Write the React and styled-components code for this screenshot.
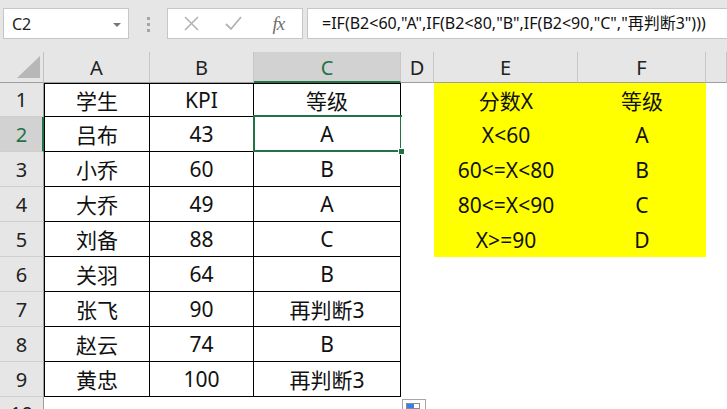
import React from 'react';
import styled, {createGlobalStyle} from 'styled-components';

const GREEN = '#217346';
const FONT = `"Noto Sans", "Noto Sans CJK SC", sans-serif`;

const columns = ['A', 'B', 'C', 'D', 'E', 'F', ''];

const rows = [
    ['学生', 'KPI', '等级', '', '分数X', '等级'],
    ['吕布', '43', 'A', '', 'X<60', 'A'],
    ['小乔', '60', 'B', '', '60<=X<80', 'B'],
    ['大乔', '49', 'A', '', '80<=X<90', 'C'],
    ['刘备', '88', 'C', '', 'X>=90', 'D'],
    ['关羽', '64', 'B'],
    ['张飞', '90', '再判断3'],
    ['赵云', '74', 'B'],
    ['黄忠', '100', '再判断3'],
];

const formula = '=IF(B2<60,"A",IF(B2<80,"B",IF(B2<90,"C","再判断3")))';

const App = () => {
    return (
        <Page>
            <GlobalStyle />
            <Toolbar>
                <NameBox>
                    <span>C2</span>
                    <Arrow />
                </NameBox>
                <Grip>
                    <i /><i /><i />
                </Grip>
                <FormulaButtons>
                    <Slot $w={43}>
                        <svg width="15" height="15" viewBox="0 0 15 15">
                            <path d="M1 1 L14 14 M14 1 L1 14" stroke="#b3b3b3" strokeWidth="1.6" fill="none" />
                        </svg>
                    </Slot>
                    <Slot $w={43}>
                        <svg width="17" height="15" viewBox="0 0 17 15">
                            <path d="M1 8 L6 13 L16 1" stroke="#b3b3b3" strokeWidth="1.8" fill="none" />
                        </svg>
                    </Slot>
                    <Slot $w={48}>
                        <Fx>fx</Fx>
                    </Slot>
                </FormulaButtons>
                <FormulaInput>{formula}</FormulaInput>
            </Toolbar>

            <Sheet>
                <Corner />
                {columns.map((c, i) => (
                    <ColHead key={i} $active={c === 'C'}>{c}</ColHead>
                ))}

                {rows.map((row, r) => (
                    <React.Fragment key={r}>
                        <RowHead $active={r === 1}>{r + 1}</RowHead>
                        {[0, 1, 2, 3, 4, 5, 6].map(c => (
                            <Cell
                                key={c}
                                $table={c < 3}
                                $left={c === 0}
                                $top={r === 0 && c < 3}
                                $fill={r < 5 && (c === 4 || c === 5)}
                                $selected={r === 1 && c === 2}
                            >
                                {row[c] || ''}
                                {r === 1 && c === 2 && <Handle />}
                            </Cell>
                        ))}
                    </React.Fragment>
                ))}

                <RowHead $last>10</RowHead>
                <BlankRow />

                <AutoFill>
                    <AutoFillBar />
                </AutoFill>
            </Sheet>
        </Page>
    );
};

const GlobalStyle = createGlobalStyle`
    html, body {
        margin : 0;
        padding : 0;
        background : #fff;
        overflow : hidden;
    }
    body {
        font-family : ${FONT};
    }
`;

const Page = styled.div`
    width : 727px;
    height : 409px;
    overflow : hidden;
    background : #fff;
`;

const Toolbar = styled.div`
    display : flex;
    align-items : flex-start;
    height : 52px;
    box-sizing : border-box;
    padding : 8px 0 0 3px;
    background : #e6e6e6;
`;

const NameBox = styled.div`
    display : flex;
    align-items : center;
    justify-content : space-between;
    width : 126px;
    height : 31px;
    box-sizing : border-box;
    padding : 0 7px 0 8px;
    background : #fff;
    border : 1px solid #c6c6c6;
    font-size : 16px;
    color : #222;
`;

const Arrow = styled.div`
    width : 0;
    height : 0;
    border-left : 4px solid transparent;
    border-right : 4px solid transparent;
    border-top : 4px solid #777;
    margin-top : 2px;
`;

const Grip = styled.div`
    display : flex;
    flex-direction : column;
    align-items : center;
    gap : 3px;
    width : 38px;
    padding-top : 9px;

    i {
        display : block;
        width : 3px;
        height : 3px;
        background : #a6a6a6;
    }
`;

const FormulaButtons = styled.div`
    display : flex;
    align-items : center;
    width : 136px;
    height : 31px;
    box-sizing : border-box;
    padding-left : 2px;
    background : #fff;
    border : 1px solid #c6c6c6;
`;

const Slot = styled.div`
    display : flex;
    align-items : center;
    justify-content : center;
    width : ${p => p.$w}px;
    height : 100%;
`;

const Fx = styled.span`
    font-family : "Liberation Serif", serif;
    font-style : italic;
    font-size : 19px;
    color : #707070;
    letter-spacing : -1px;
`;

const FormulaInput = styled.div`
    flex : 1;
    height : 31px;
    box-sizing : border-box;
    margin-left : 4px;
    margin-right : -1px;
    padding-left : 14px;
    background : #fff;
    border : 1px solid #c6c6c6;
    font-size : 16px;
    line-height : 29px;
    color : #111;
    white-space : nowrap;
`;

const Sheet = styled.div`
    position : relative;
    display : grid;
    grid-template-columns : 44px 106px 104px 147px 33px 144px 128px 1fr;
    grid-template-rows : 31px 34px repeat(8, 35px) 35px;
    font-size : 21px;
    color : #111;
`;

const Corner = styled.div`
    position : relative;
    background : #e6e6e6;
    border-right : 1px solid #c2c2c2;
    border-bottom : 1px solid #9e9e9e;
    box-sizing : border-box;

    &::after {
        content : '';
        position : absolute;
        right : 3px;
        bottom : 4px;
        border-left : 23px solid transparent;
        border-bottom : 22px solid #b7b7b7;
    }
`;

const ColHead = styled.div`
    display : flex;
    align-items : center;
    justify-content : center;
    box-sizing : border-box;
    background : ${p => p.$active ? '#d2d2d2' : '#e6e6e6'};
    color : ${p => p.$active ? GREEN : '#222'};
    border-right : 1px solid #c6c6c6;
    border-bottom : ${p => p.$active ? `2px solid ${GREEN}` : '1px solid #9e9e9e'};
    font-size : 20px;
    padding-top : ${p => p.$active ? '1px' : '0'};
`;

const RowHead = styled.div`
    display : flex;
    align-items : ${p => p.$last ? 'flex-start' : 'center'};
    justify-content : center;
    box-sizing : border-box;
    background : ${p => p.$active ? '#d2d2d2' : '#e6e6e6'};
    color : ${p => p.$active ? GREEN : '#222'};
    border-right : ${p => p.$active ? `2px solid ${GREEN}` : '1px solid #9e9e9e'};
    border-bottom : 1px solid #cfcfcf;
    font-size : 20px;
    padding-top : ${p => p.$last ? '3px' : '0'};
    padding-left : ${p => p.$active ? '1px' : '0'};
`;

const Cell = styled.div`
    position : relative;
    display : flex;
    align-items : center;
    justify-content : center;
    box-sizing : border-box;
    white-space : nowrap;
    background : ${p => p.$fill ? '#ffff00' : '#fff'};
    border-right : ${p => p.$table ? '1px solid #000' : 'none'};
    border-bottom : ${p => p.$table ? '1px solid #000' : 'none'};
    border-left : ${p => p.$left ? '1px solid #000' : 'none'};
    border-top : ${p => p.$top ? '1px solid #000' : 'none'};

    &::after {
        content : '';
        display : ${p => p.$selected ? 'block' : 'none'};
        position : absolute;
        left : -1px;
        top : -2px;
        right : -2px;
        bottom : -1px;
        border : 2px solid ${GREEN};
        pointer-events : none;
    }
`;

const Handle = styled.div`
    position : absolute;
    right : -5px;
    bottom : -4px;
    width : 5px;
    height : 5px;
    background : ${GREEN};
    border : 1px solid #fff;
    z-index : 2;
`;

const BlankRow = styled.div`
    grid-column : 2 / -1;
    background : #fff;
`;

const AutoFill = styled.div`
    position : absolute;
    left : 402px;
    top : 347px;
    width : 24px;
    height : 14px;
    box-sizing : border-box;
    background : #fff;
    border : 1px solid #a6a6a6;
    padding : 3px;
`;

const AutoFillBar = styled.div`
    width : 14px;
    height : 6px;
    box-sizing : border-box;
    border : 1px solid #8c8c8c;
    background : linear-gradient(to right, #3a7ee8 0 7px, #fff 7px);
`;

export default App;
